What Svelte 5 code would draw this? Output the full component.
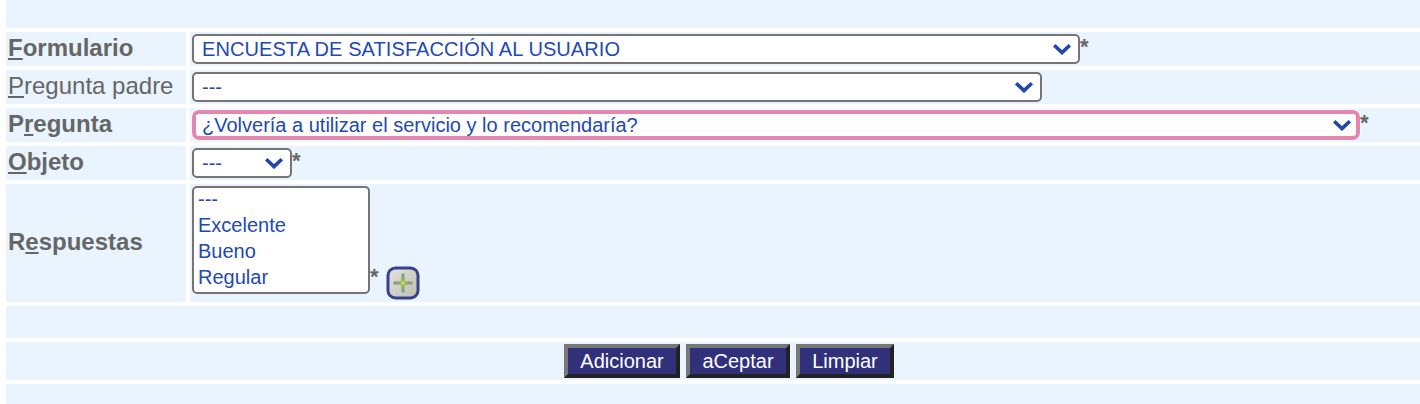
<script>
  const options = ['---', 'Excelente', 'Bueno', 'Regular'];
</script>

{#snippet chevron()}
  <svg class="chev" viewBox="0 0 20 12" width="20" height="12" aria-hidden="true">
    <path d="M2.2 2.2 L10 9.6 L17.8 2.2" fill="none" stroke="#2146ad" stroke-width="3.6" />
  </svg>
{/snippet}

<div class="form">
  <div class="band top"></div>

  <div class="row">
    <div class="label strong"><u>F</u>ormulario</div>
    <div class="value">
      <div class="select s1"><span>ENCUESTA DE SATISFACCIÓN AL USUARIO</span>{@render chevron()}</div><span class="req">*</span>
    </div>
  </div>

  <div class="row">
    <div class="label"><u>P</u>regunta padre</div>
    <div class="value">
      <div class="select s2"><span>---</span>{@render chevron()}</div>
    </div>
  </div>

  <div class="row">
    <div class="label strong">P<u>r</u>egunta</div>
    <div class="value">
      <div class="select s3 focus"><span>¿Volvería a utilizar el servicio y lo recomendaría?</span>{@render chevron()}</div><span class="req">*</span>
    </div>
  </div>

  <div class="row">
    <div class="label strong"><u>O</u>bjeto</div>
    <div class="value">
      <div class="select s4"><span>---</span>{@render chevron()}</div><span class="req">*</span>
    </div>
  </div>

  <div class="row tall">
    <div class="label strong">R<u>e</u>spuestas</div>
    <div class="value multi">
      <div class="listbox">
        {#each options as o}<div class="opt">{o}</div>{/each}
      </div>
      <span class="req low">*</span>
      <button class="add" aria-label="Agregar">
        <svg viewBox="0 0 34 34" width="34" height="34" aria-hidden="true">
          <defs>
            <linearGradient id="face" x1="0" y1="0" x2="1" y2="1">
              <stop offset="0" stop-color="#e2e2da" />
              <stop offset="1" stop-color="#bfbfb2" />
            </linearGradient>
            <filter id="soft" x="-10%" y="-10%" width="120%" height="120%">
              <feGaussianBlur stdDeviation="0.6" />
            </filter>
          </defs>
          <g filter="url(#soft)">
            <rect x="0.5" y="0.5" width="33" height="33" rx="9" fill="#35408f" />
            <rect x="3.5" y="3.5" width="27" height="27" rx="6" fill="url(#face)" />
            <path d="M17 7.5 V26.5 M7.5 17 H26.5" stroke="#7f99a0" stroke-width="3" />
            <path d="M17 11.5 V22.5 M11.5 17 H22.5" stroke="#94b45a" stroke-width="3" />
            <circle cx="17" cy="17" r="2" fill="#c4dc50" />
          </g>
        </svg>
      </button>
    </div>
  </div>

  <div class="band b6"></div>

  <div class="band actions">
    <button class="btn">Adicionar</button>
    <button class="btn b2">aCeptar</button>
    <button class="btn b3">Limpiar</button>
  </div>

  <div class="band last"></div>
</div>

<style>
  :global(body) {
    margin: 0;
    background: #fff;
  }
  .form {
    display: flex;
    flex-direction: column;
    gap: 4px;
    height: 404px;
    overflow: hidden;
    padding-left: 6px;
    font-family: "Liberation Sans", Arial, sans-serif;
    color: #666;
  }
  .band {
    background: #e9f4fe;
  }
  .top { height: 28px; }
  .b6 { height: 32px; }
  .last { height: 20px; flex: none; }
  .actions {
    height: 38px;
    display: flex;
    align-items: center;
    justify-content: center;
    gap: 6px;
    padding-left: 32px;
  }
  .row {
    display: grid;
    grid-template-columns: 180px 1fr;
    column-gap: 4px;
    height: 34px;
  }
  .row.tall { height: 118px; }
  .label, .value { background: #e9f4fe; }
  .label {
    display: flex;
    align-items: center;
    padding: 0 0 2px 2px;
    font-size: 24px;
    white-space: pre;
  }
  .label u { text-underline-offset: 2px; }
  .strong { font-weight: 700; }
  .value {
    display: flex;
    align-items: center;
    padding-left: 2px;
  }
  .select {
    box-sizing: border-box;
    height: 30px;
    display: flex;
    align-items: center;
    justify-content: space-between;
    background: #fff;
    border: 2px solid #757575;
    border-radius: 5px;
    padding: 0 6px 0 8px;
    font-size: 20px;
    color: #2349b2;
  }
  .s1 { width: 888px; letter-spacing: 0.08px; }
  .s2 { width: 850px; }
  .s3 { width: 1168px; }
  .s4 { width: 100px; }
  .focus {
    border: 4px solid #e685ae;
    border-radius: 7px;
    padding: 0 4px 0 6px;
    box-shadow: 0 0 0 1px #fff;
  }
  .chev { flex: none; }
  .req {
    align-self: flex-start;
    margin-top: 3px;
    font-size: 22px;
    line-height: 24px;
    font-weight: 700;
    color: #666;
  }
  .multi {
    align-items: flex-start;
    padding-top: 2px;
  }
  .listbox {
    box-sizing: border-box;
    width: 178px;
    height: 108px;
    background: #fff;
    border: 2px solid #757575;
    border-radius: 5px;
    padding: 0 4px;
    font-size: 20px;
    color: #2349b2;
  }
  .opt { height: 26px; line-height: 22px; }
  .req.low { margin-top: 79px; width: 16px; }
  .add {
    margin: 80px 0 0 0;
    padding: 0;
    border: 0;
    background: none;
    width: 34px;
    height: 34px;
  }
  .add svg { display: block; }
  .btn {
    box-sizing: border-box;
    height: 34px;
    width: 116px;
    padding: 0;
    border: 4px solid;
    border-color: #777 #222 #222 #777;
    background: #30317a;
    color: #fff;
    font-family: "Liberation Sans", Arial, sans-serif;
    font-size: 20px;
  }
  .b2 { width: 104px; }
  .b3 { width: 98px; }
</style>
